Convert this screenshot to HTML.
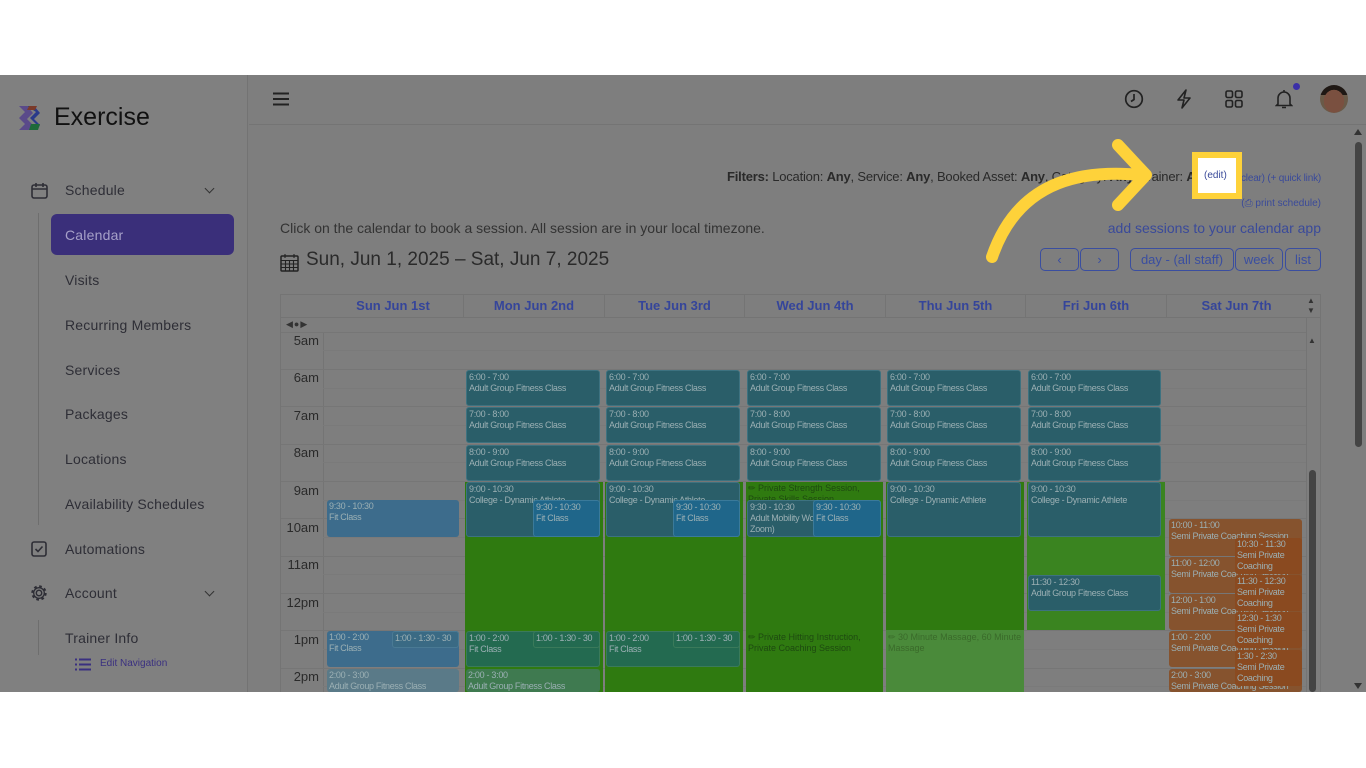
<!DOCTYPE html>
<html><head><meta charset="utf-8"><style>
*{box-sizing:border-box;margin:0;padding:0}
body{width:1366px;height:768px;background:#fff;position:relative;overflow:hidden;font-family:"Liberation Sans",sans-serif}
.a{position:absolute}
#app{position:absolute;left:0;top:75px;width:1366px;height:617px;background:#7e7e7e;overflow:hidden}
.nav{position:absolute;left:65px;font-size:14px;color:#2e2e36;letter-spacing:.2px}
.ev{position:absolute;font-size:9px;line-height:11px;color:#9cb0b4;padding:1px 2px;border-radius:3px;overflow:hidden;letter-spacing:-.3px}
.t{background:#2a5e69;border:1px solid #3d7280}
.hr{position:absolute;left:281px;width:1025px;height:1px;background:#767676}
.hh{position:absolute;left:323px;width:983px;height:1px;background:#7a7a7a}
.tl{position:absolute;left:281px;width:38px;text-align:right;font-size:13px;color:#2a2a2a}
.col{position:absolute;top:295px;height:22px;font-size:13px;font-weight:bold;color:#35459a;text-align:center;line-height:22px}
.btn{position:absolute;top:248px;height:23px;border:1px solid #3a4ea0;border-radius:5px;color:#3a4ea0;font-size:13px;text-align:center;line-height:21px}
</style></head><body>
<div id="app">
<div class="a" style="left:0;top:0;width:248px;height:617px;background:#808080;border-right:1px solid #737373"></div>
<svg class="a" style="left:17px;top:29px" width="28" height="28" viewBox="0 0 28 28"><path d="M2 2h8l6 7-6 6 6 6-2 5H2l6-6-6-6 6-6z" fill="#5a4a8a"/><path d="M10 2h7l6 7-6 6 6 6-3 5h-7l6-6-6-6 6-6z" fill="#2a3a8a"/><path d="M14 20h9l-2 6h-9z" fill="#1e6a3a"/><path d="M12 2h8l-2 4h-8z" fill="#7a3a2a"/></svg>
<div class="a" style="left:54px;top:28px;font-size:25px;color:#111;font-weight:500">Exercise</div>
<svg class="a" style="left:31px;top:107px" width="17" height="17" viewBox="0 0 17 17"><rect x="1" y="3" width="15" height="13" rx="2" fill="none" stroke="#2e2e36" stroke-width="1.6"/><path d="M1 7h15M5 1v4M12 1v4" stroke="#2e2e36" stroke-width="1.6"/></svg>
<div class="nav" style="top:107px">Schedule</div>
<div class="a" style="left:206px;top:110px;width:7px;height:7px;border-right:1.5px solid #333;border-bottom:1.5px solid #333;transform:rotate(45deg)"></div>
<div class="a" style="left:38px;top:138px;width:1px;height:312px;background:#6e6e6e"></div>
<div class="a" style="left:51px;top:139px;width:183px;height:41px;background:#3a2f7a;border-radius:6px"></div>
<div class="nav" style="top:152px;color:#a6a0c8">Calendar</div>
<div class="nav" style="top:197px">Visits</div>
<div class="nav" style="top:242px">Recurring Members</div>
<div class="nav" style="top:287px">Services</div>
<div class="nav" style="top:331px">Packages</div>
<div class="nav" style="top:376px">Locations</div>
<div class="nav" style="top:421px">Availability Schedules</div>
<svg class="a" style="left:31px;top:466px" width="16" height="16"><rect x="1" y="1" width="14" height="14" rx="2" fill="none" stroke="#2e2e36" stroke-width="1.6"/><path d="M4.5 8l2.5 2.5 4.5-5" fill="none" stroke="#2e2e36" stroke-width="1.6"/></svg>
<div class="nav" style="top:466px">Automations</div>
<svg class="a" style="left:30px;top:509px" width="18" height="18" viewBox="0 0 18 18"><circle cx="9" cy="9" r="2.7" fill="none" stroke="#2e2e36" stroke-width="1.5"/><circle cx="9" cy="9" r="6.5" fill="none" stroke="#2e2e36" stroke-width="2.4" stroke-dasharray="2.6 2.5"/><circle cx="9" cy="9" r="5.3" fill="none" stroke="#2e2e36" stroke-width="1.3"/></svg>
<div class="nav" style="top:510px">Account</div>
<div class="a" style="left:206px;top:513px;width:7px;height:7px;border-right:1.5px solid #333;border-bottom:1.5px solid #333;transform:rotate(45deg)"></div>
<div class="a" style="left:38px;top:545px;width:1px;height:35px;background:#6e6e6e"></div>
<div class="nav" style="top:555px">Trainer Info</div>
<svg class="a" style="left:75px;top:583px" width="16" height="13"><path d="M0 1.5h2M4 1.5h12M0 6.5h2M4 6.5h12M0 11.5h2M4 11.5h12" stroke="#3a3080" stroke-width="2"/></svg>
<div class="a" style="left:100px;top:583px;font-size:10px;color:#3a3080">Edit Navigation</div>
<div class="a" style="left:249px;top:49px;width:1117px;height:1px;background:#747474"></div>
<svg class="a" style="left:273px;top:17px" width="16" height="14"><path d="M0 1.5h16M0 7h16M0 12.5h16" stroke="#222" stroke-width="2"/></svg>
<svg class="a" style="left:1124px;top:14px" width="20" height="20"><circle cx="10" cy="10" r="8.3" fill="none" stroke="#222" stroke-width="1.7"/><path d="M10 5v5.5l-3 2" fill="none" stroke="#222" stroke-width="1.7"/></svg>
<svg class="a" style="left:1175px;top:14px" width="18" height="20"><path d="M11 1L3 11h6l-2 8 8-10h-6z" fill="none" stroke="#222" stroke-width="1.6" stroke-linejoin="round"/></svg>
<svg class="a" style="left:1225px;top:15px" width="18" height="18"><rect x="1" y="1" width="6.5" height="6.5" rx="1.6" fill="none" stroke="#222" stroke-width="1.6"/><rect x="10.5" y="1" width="6.5" height="6.5" rx="1.6" fill="none" stroke="#222" stroke-width="1.6"/><rect x="1" y="10.5" width="6.5" height="6.5" rx="1.6" fill="none" stroke="#222" stroke-width="1.6"/><rect x="10.5" y="10.5" width="6.5" height="6.5" rx="1.6" fill="none" stroke="#222" stroke-width="1.6"/></svg>
<svg class="a" style="left:1275px;top:14px" width="18" height="20"><path d="M3 15V9a6 6 0 0112 0v6l1.5 1.5h-15z M9 1v2 M7 18.5h4" fill="none" stroke="#222" stroke-width="1.6"/></svg>
<div class="a" style="left:1293px;top:8px;width:7px;height:7px;border-radius:50%;background:#3b2fa8"></div>
<div class="a" style="left:1320px;top:10px;width:28px;height:28px;border-radius:50%;background:radial-gradient(ellipse 40% 45% at 50% 58%,#7a5040 0 90%,transparent 92%),linear-gradient(#1f1814 0 35%,#6a5a48 36%)"></div>
<div class="a" style="left:1355px;top:67px;width:7px;height:305px;background:#444;border-radius:4px"></div>
<div class="a" style="left:1354px;top:54px;border:4px solid transparent;border-bottom:6px solid #333;border-top:0"></div>
<div class="a" style="left:1354px;top:608px;border:4px solid transparent;border-top:6px solid #333;border-bottom:0"></div>
<div class="a" style="left:0;top:94px;width:1321px;text-align:right;font-size:13px;color:#2a2a2a;white-space:nowrap;letter-spacing:-.2px">
<b>Filters:</b> Location: <b>Any</b>, Service: <b>Any</b>, Booked Asset: <b>Any</b>, Category: <b>Any</b>, Trainer: <b>Any</b> <span style="font-size:10px;color:#3a4a9a">(edit) (clear) (+ quick link)</span></div>
<div class="a" style="left:1200px;top:123px;width:121px;text-align:right;font-size:10px;color:#3a4a9a">(&#9113; print schedule)</div>
<div class="a" style="left:280px;top:145px;font-size:14px;color:#333">Click on the calendar to book a session. All session are in your local timezone.</div>
<div class="a" style="left:0;top:145px;width:1321px;text-align:right;font-size:14px;color:#3a4a9a">add sessions to your calendar app</div>
<svg class="a" style="left:280px;top:178px" width="19" height="19"><rect x="1" y="3" width="17" height="15" rx="1" fill="none" stroke="#222" stroke-width="1.5"/><path d="M1 7.5h17M1 11h17M1 14.5h17M5.5 7.5v10.5M9.5 7.5v10.5M13.5 7.5v10.5M5 1v4M14 1v4" stroke="#222" stroke-width="1.1"/></svg>
<div class="a" style="left:306px;top:174px;font-size:19px;color:#2a2a2a">Sun, Jun 1, 2025 – Sat, Jun 7, 2025</div>
<div class="btn" style="left:1040px;top:173px;width:39px">&#8249;</div>
<div class="btn" style="left:1080px;top:173px;width:39px">&#8250;</div>
<div class="btn" style="left:1130px;top:173px;width:104px">day - (all staff)</div>
<div class="btn" style="left:1235px;top:173px;width:48px">week</div>
<div class="btn" style="left:1285px;top:173px;width:36px">list</div>
</div>
<div class="a" style="left:280px;top:294px;width:1041px;height:398px;border:1px solid #747474;border-bottom:0"></div>
<div class="a" style="left:281px;top:317px;width:1039px;height:1px;background:#747474"></div>
<div class="a" style="left:323px;top:332px;width:1px;height:360px;background:#747474"></div>
<div class="a" style="left:1306px;top:317px;width:1px;height:375px;background:#747474"></div>
<div class="a" style="left:286px;top:319px;font-size:9px;color:#333;letter-spacing:1px">&#9664;&#9679;&#9654;</div>
<div class="a" style="left:1307px;top:296px;font-size:8px;color:#333;line-height:10px">&#9650;<br>&#9660;</div>
<div class="a" style="left:1308px;top:336px;font-size:8px;color:#333">&#9650;</div>
<div class="a" style="left:1309px;top:470px;width:7px;height:222px;background:#444;border-radius:4px"></div>
<div class="col" style="left:323px;width:140px">Sun Jun 1st</div>
<div class="col" style="left:463px;width:141px;border-left:1px solid #747474">Mon Jun 2nd</div>
<div class="col" style="left:604px;width:140px;border-left:1px solid #747474">Tue Jun 3rd</div>
<div class="col" style="left:744px;width:141px;border-left:1px solid #747474">Wed Jun 4th</div>
<div class="col" style="left:885px;width:140px;border-left:1px solid #747474">Thu Jun 5th</div>
<div class="col" style="left:1025px;width:141px;border-left:1px solid #747474">Fri Jun 6th</div>
<div class="col" style="left:1166px;width:140px;border-left:1px solid #747474">Sat Jun 7th</div>
<div class="hr" style="top:332px"></div><div class="hh" style="top:350px"></div>
<div class="hr" style="top:369px"></div><div class="hh" style="top:388px"></div>
<div class="hr" style="top:406px"></div><div class="hh" style="top:425px"></div>
<div class="hr" style="top:444px"></div><div class="hh" style="top:462px"></div>
<div class="hr" style="top:481px"></div><div class="hh" style="top:500px"></div>
<div class="hr" style="top:518px"></div><div class="hh" style="top:537px"></div>
<div class="hr" style="top:556px"></div><div class="hh" style="top:574px"></div>
<div class="hr" style="top:593px"></div><div class="hh" style="top:612px"></div>
<div class="hr" style="top:630px"></div><div class="hh" style="top:649px"></div>
<div class="hr" style="top:668px"></div><div class="hh" style="top:686px"></div>
<div class="tl" style="top:333px">5am</div><div class="tl" style="top:370px">6am</div><div class="tl" style="top:408px">7am</div><div class="tl" style="top:445px">8am</div><div class="tl" style="top:483px">9am</div><div class="tl" style="top:520px">10am</div><div class="tl" style="top:557px">11am</div><div class="tl" style="top:595px">12pm</div><div class="tl" style="top:632px">1pm</div><div class="tl" style="top:669px">2pm</div>
<div class="a" style="left:465px;top:482px;width:138px;height:210px;background:#2f7a10"></div>
<div class="a" style="left:605px;top:482px;width:138px;height:210px;background:#2f7a10"></div>
<div class="a" style="left:746px;top:482px;width:137px;height:210px;background:#2f7a10"></div>
<div class="a" style="left:886px;top:482px;width:138px;height:148px;background:#2f7a10"></div>
<div class="a" style="left:886px;top:630px;width:138px;height:62px;background:#4a8a3a"></div>
<div class="a" style="left:1027px;top:482px;width:138px;height:148px;background:#3a8420"></div>
<div class="a" style="left:748px;top:483px;font-size:9px;color:#1e4a10;line-height:11px;width:135px">&#9999; Private Strength Session, Private Skills Session</div>
<div class="a" style="left:748px;top:632px;font-size:9px;color:#1e4a10;line-height:11px;width:135px">&#9999; Private Hitting Instruction, Private Coaching Session</div>
<div class="a" style="left:888px;top:632px;font-size:9px;color:#3a6a2a;line-height:11px;width:135px">&#9999; 30 Minute Massage, 60 Minute Massage</div>
<div class="ev t" style="left:466px;top:370px;width:134px;height:36px">6:00 - 7:00<br>Adult Group Fitness Class</div>
<div class="ev t" style="left:466px;top:407px;width:134px;height:36px">7:00 - 8:00<br>Adult Group Fitness Class</div>
<div class="ev t" style="left:466px;top:445px;width:134px;height:36px">8:00 - 9:00<br>Adult Group Fitness Class</div>
<div class="ev t" style="left:466px;top:482px;width:134px;height:55px">9:00 - 10:30<br>College - Dynamic Athlete</div>
<div class="ev t" style="left:606px;top:370px;width:134px;height:36px">6:00 - 7:00<br>Adult Group Fitness Class</div>
<div class="ev t" style="left:606px;top:407px;width:134px;height:36px">7:00 - 8:00<br>Adult Group Fitness Class</div>
<div class="ev t" style="left:606px;top:445px;width:134px;height:36px">8:00 - 9:00<br>Adult Group Fitness Class</div>
<div class="ev t" style="left:606px;top:482px;width:134px;height:55px">9:00 - 10:30<br>College - Dynamic Athlete</div>
<div class="ev t" style="left:747px;top:370px;width:134px;height:36px">6:00 - 7:00<br>Adult Group Fitness Class</div>
<div class="ev t" style="left:747px;top:407px;width:134px;height:36px">7:00 - 8:00<br>Adult Group Fitness Class</div>
<div class="ev t" style="left:747px;top:445px;width:134px;height:36px">8:00 - 9:00<br>Adult Group Fitness Class</div>
<div class="ev t" style="left:747px;top:500px;width:134px;height:37px">9:30 - 10:30<br>Adult Mobility Work (Virtual - Zoom)</div>
<div class="ev t" style="left:887px;top:370px;width:134px;height:36px">6:00 - 7:00<br>Adult Group Fitness Class</div>
<div class="ev t" style="left:887px;top:407px;width:134px;height:36px">7:00 - 8:00<br>Adult Group Fitness Class</div>
<div class="ev t" style="left:887px;top:445px;width:134px;height:36px">8:00 - 9:00<br>Adult Group Fitness Class</div>
<div class="ev t" style="left:887px;top:482px;width:134px;height:55px">9:00 - 10:30<br>College - Dynamic Athlete</div>
<div class="ev t" style="left:1028px;top:370px;width:133px;height:36px">6:00 - 7:00<br>Adult Group Fitness Class</div>
<div class="ev t" style="left:1028px;top:407px;width:133px;height:36px">7:00 - 8:00<br>Adult Group Fitness Class</div>
<div class="ev t" style="left:1028px;top:445px;width:133px;height:36px">8:00 - 9:00<br>Adult Group Fitness Class</div>
<div class="ev t" style="left:1028px;top:482px;width:133px;height:55px">9:00 - 10:30<br>College - Dynamic Athlete</div>
<div class="ev t" style="left:1028px;top:575px;width:133px;height:36px">11:30 - 12:30<br>Adult Group Fitness Class</div>
<div class="ev" style="left:327px;top:500px;width:132px;height:37px;background:#3d6c8c">9:30 - 10:30<br>Fit Class</div>
<div class="ev" style="left:533px;top:500px;width:67px;height:37px;background:#1f668a;border:1px solid #3a7a9a">9:30 - 10:30<br>Fit Class</div>
<div class="ev" style="left:673px;top:500px;width:67px;height:37px;background:#1f668a;border:1px solid #3a7a9a">9:30 - 10:30<br>Fit Class</div>
<div class="ev" style="left:813px;top:500px;width:68px;height:37px;background:#1f668a;border:1px solid #3a7a9a">9:30 - 10:30<br>Fit Class</div>
<div class="ev" style="left:327px;top:631px;width:132px;height:36px;background:#3d6c8c">1:00 - 2:00<br>Fit Class</div>
<div class="ev" style="left:392px;top:631px;width:67px;height:17px;background:#3a6a84;border:1px solid #4a7a94">1:00 - 1:30 - 30</div>
<div class="ev" style="left:327px;top:669px;width:132px;height:23px;background:#5a7a88">2:00 - 3:00<br>Adult Group Fitness Class</div>
<div class="ev" style="left:466px;top:631px;width:134px;height:36px;background:#236a50;border:1px solid #3a7a5a">1:00 - 2:00<br>Fit Class</div>
<div class="ev" style="left:533px;top:631px;width:67px;height:17px;background:#236a50;border:1px solid #3a7a5a">1:00 - 1:30 - 30</div>
<div class="ev" style="left:466px;top:669px;width:134px;height:23px;background:#3f7a50">2:00 - 3:00<br>Adult Group Fitness Class</div>
<div class="ev" style="left:606px;top:631px;width:134px;height:36px;background:#236a50;border:1px solid #3a7a5a">1:00 - 2:00<br>Fit Class</div>
<div class="ev" style="left:673px;top:631px;width:67px;height:17px;background:#236a50;border:1px solid #3a7a5a">1:00 - 1:30 - 30</div>
<div class="ev" style="left:1169px;top:519px;width:133px;height:37px;background:#86532e">10:00 - 11:00<br>Semi Private Coaching Session</div>
<div class="ev" style="left:1169px;top:557px;width:133px;height:36px;background:#86532e">11:00 - 12:00<br>Semi Private Coaching Session</div>
<div class="ev" style="left:1169px;top:594px;width:133px;height:36px;background:#86532e">12:00 - 1:00<br>Semi Private Coaching Session</div>
<div class="ev" style="left:1169px;top:631px;width:133px;height:36px;background:#86532e">1:00 - 2:00<br>Semi Private Coaching Session</div>
<div class="ev" style="left:1169px;top:669px;width:133px;height:23px;background:#86532e">2:00 - 3:00<br>Semi Private Coaching Session</div>
<div class="ev" style="left:1235px;top:538px;width:67px;height:36px;background:#8a4a20">10:30 - 11:30<br>Semi Private Coaching</div>
<div class="ev" style="left:1235px;top:575px;width:67px;height:36px;background:#8a4a20">11:30 - 12:30<br>Semi Private Coaching</div>
<div class="ev" style="left:1235px;top:612px;width:67px;height:36px;background:#8a4a20">12:30 - 1:30<br>Semi Private Coaching</div>
<div class="ev" style="left:1235px;top:650px;width:67px;height:36px;background:#8a4a20">1:30 - 2:30<br>Semi Private Coaching</div>
<div class="a" style="left:1192px;top:152px;width:50px;height:47px;border:6px solid #fed23a;background:#fff"></div>
<div class="a" style="left:1204px;top:170px;font-size:10px;color:#3a4a9a">(edit)</div>
<svg class="a" style="left:980px;top:135px" width="180" height="135"><path d="M12 122 C40 40 110 35 162 40" fill="none" stroke="#fed23a" stroke-width="12" stroke-linecap="round"/><path d="M138 10 L166 40 L138 70" fill="none" stroke="#fed23a" stroke-width="12" stroke-linecap="round" stroke-linejoin="round"/></svg>
</body></html>
